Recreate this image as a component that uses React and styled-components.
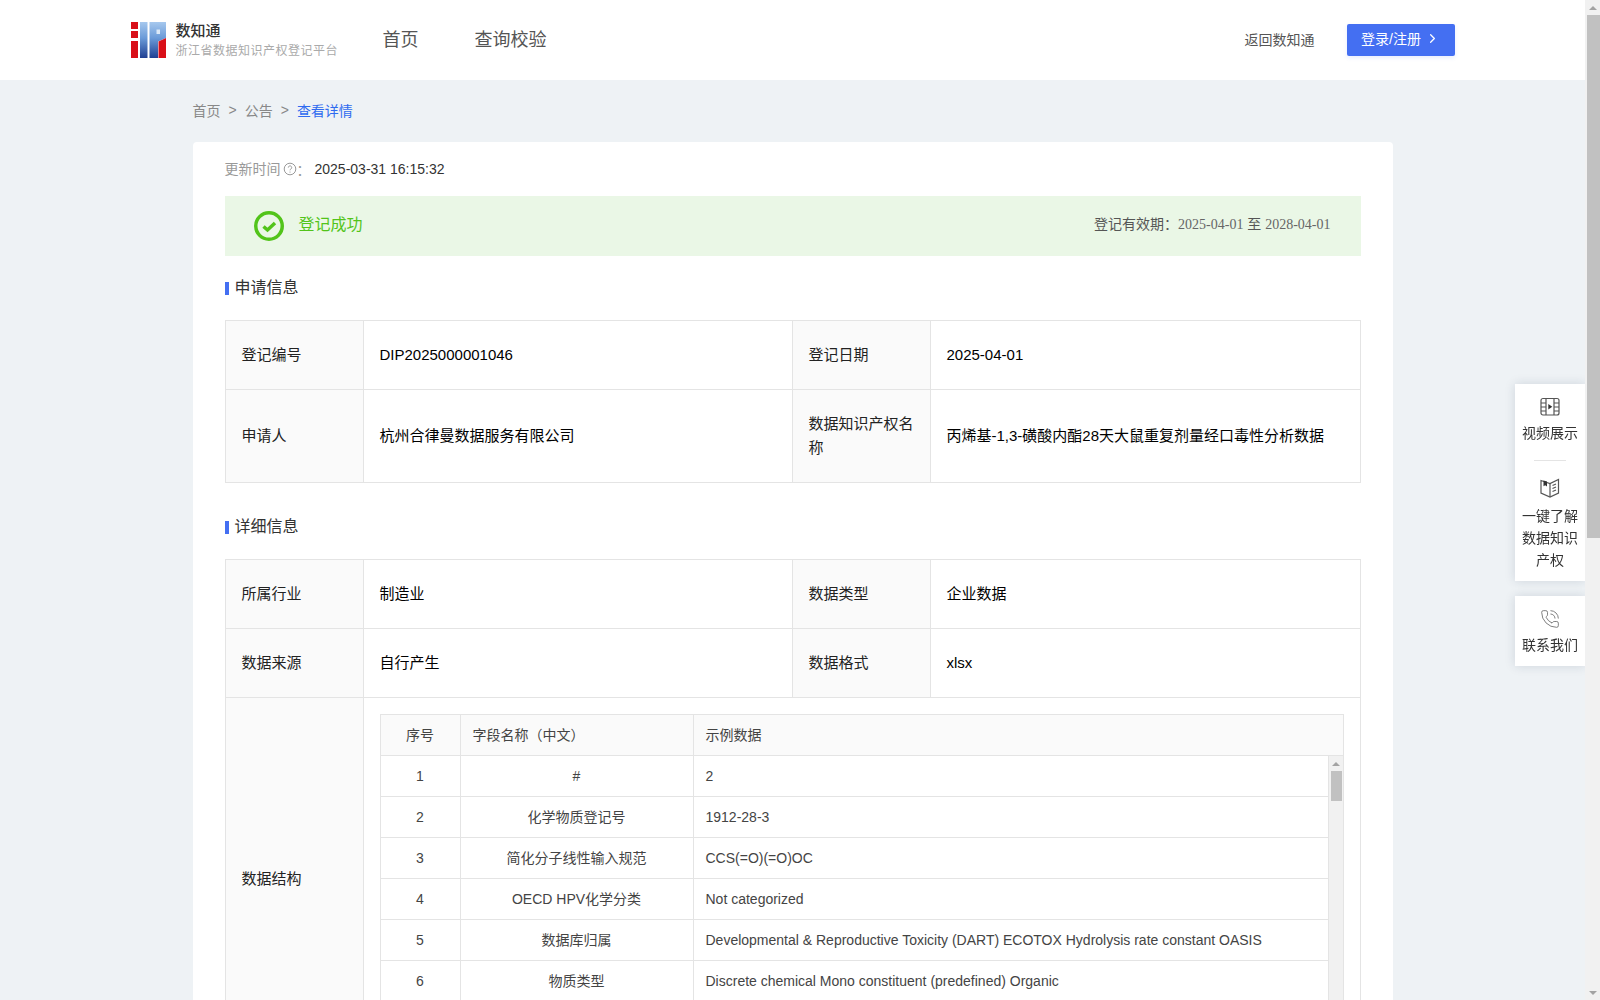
import React from 'react';
import styled, { createGlobalStyle } from 'styled-components';
import { ChevronRight, PhoneCall } from 'lucide-react';

const GlobalStyle = createGlobalStyle`
  body {
    margin: 0;
    background: #eef2f5;
    color: #333;
    font-family: "Liberation Sans", "Noto Sans CJK SC", sans-serif;
    font-size: 14px;
  }

  * {
    box-sizing: border-box;
  }
`;

const Page = styled.div`
  min-height: 1855px;
  padding-right: 15px;
`;

const Rail = styled.div`
  width: 15px;
  display: flex;
  flex-direction: column;
  flex-shrink: 0;
  background: #f1f1f1;
`;

const PageRail = styled(Rail)`
  position: fixed;
  top: 0;
  right: 0;
  bottom: 0;
`;

const TableRail = styled(Rail)`
  border-left: 1px solid #e4e4e4;
`;

const RailArrow = styled.div`
  height: ${props => props.$size}px;
  flex-shrink: 0;
  display: flex;
  align-items: center;
  justify-content: center;
  margin-top: ${props => (props.$down ? 'auto' : '0')};

  &::before {
    content: '';
    border-left: 4px solid transparent;
    border-right: 4px solid transparent;
    border-${props => (props.$down ? 'top' : 'bottom')}: 4px solid #a3a3a3;
  }
`;

const RailThumb = styled.div`
  height: ${props => props.$length}px;
  margin-left: ${props => props.$inset}px;
  margin-right: ${props => props.$end}px;
  background: #c1c1c1;
`;

const Header = styled.header`
  height: 80px;
  background: #fff;
`;

const HeaderInner = styled.div`
  width: 1324px;
  height: 100%;
  margin: 0 auto;
  display: flex;
  align-items: center;
`;

const Brand = styled.div`
  display: flex;
  align-items: center;
  gap: 10px;
  width: 252px;
`;

const BrandText = styled.div`
  display: flex;
  flex-direction: column;
  gap: 2px;
`;

const BrandName = styled.div`
  font-size: 15px;
  line-height: 20px;
  font-weight: 500;
  color: #333;
`;

const BrandSub = styled.div`
  font-size: 12px;
  line-height: 16px;
  letter-spacing: 0.5px;
  color: #aaa;
`;

const Nav = styled.nav`
  display: flex;
  gap: 56px;
  flex: 1;
  padding-bottom: 4px;
`;

const NavLink = styled.a`
  font-size: 18px;
  color: #555;
`;

const BackLink = styled.a`
  font-size: 14px;
  color: #555;
  margin-right: 32px;
  padding-bottom: 2px;
`;

const LoginButton = styled.button`
  width: 108px;
  height: 32px;
  display: flex;
  align-items: center;
  justify-content: center;
  gap: 4px;
  padding: 0 0 4px;
  border: none;
  border-radius: 2px;
  background: #446ff2;
  color: #fff;
  font: inherit;
  font-size: 14px;
  box-shadow: 0 2px 4px rgba(68, 111, 242, 0.12);
`;

const Main = styled.main`
  width: 1200px;
  margin: 0 auto;
`;

const Breadcrumb = styled.div`
  height: 62px;
  display: flex;
  align-items: center;
  gap: 8px;
  padding-bottom: 3px;
  color: #888;
`;

const Crumb = styled.span`
  color: ${props => (props.$active ? '#2f6bf0' : '#888')};
`;

const Card = styled.section`
  background: #fff;
  border-radius: 4px;
  padding: 16px 32px 32px;
`;

const UpdateRow = styled.div`
  display: flex;
  align-items: center;
  height: 22px;
  margin-bottom: 1px;
  color: #999;
`;

const UpdateLabel = styled.span`
  margin-top: -2px;
`;

const HelpMark = styled.svg`
  width: 14px;
  height: 14px;
  margin-left: 2px;
`;

const UpdateValue = styled.span`
  color: #333;
  margin-left: 4px;
`;

const StatusBar = styled.div`
  height: 60px;
  margin-top: 16px;
  padding: 0 30px 0 29px;
  display: flex;
  align-items: center;
  background: #eaf7e6;
`;

const StatusText = styled.span`
  flex: 1;
  margin-left: 15px;
  padding-bottom: 7px;
  font-size: 16px;
  color: #52c41a;
`;

const Validity = styled.span`
  color: #555;
  padding-bottom: 6px;
`;

const ValidityDate = styled.span`
  font-family: "Liberation Serif", "Noto Sans CJK SC", serif;
  color: #666;
`;

const SectionTitle = styled.h3`
  margin: ${props => props.$top}px 0 22px;
  display: flex;
  align-items: center;
  gap: 6px;
  height: 22px;
  font-size: 16px;
  font-weight: 400;
  color: #333;
  line-height: 20px;

  &::before {
    content: '';
    width: 4px;
    height: 13px;
    margin-top: 3px;
    background: #446ff2;
  }
`;

const SectionLabel = styled.span`
  margin-top: 2px;
`;

const InfoTable = styled.table`
  width: 1136px;
  table-layout: fixed;
  border-collapse: collapse;
  font-size: 15px;
  line-height: 24px;
  color: #000;
`;

const Label = styled.td`
  width: 138px;
  padding: 22px 16px;
  border: 1px solid #e4e4e4;
  background: #fafafa;
  color: #222;
`;

const Value = styled.td`
  padding: ${props => (props.$flush ? '16px' : '22px 16px')};
  border: 1px solid #e4e4e4;
`;

const StructTable = styled.div`
  border: 1px solid #e4e4e4;
  border-bottom: none;
  font-size: 14px;
  line-height: 20px;
  color: #444;
`;

const StructBody = styled.div`
  height: 288px;
  display: flex;
`;

const StructRows = styled.div`
  flex: 1;
  min-width: 0;
`;

const FieldRow = styled.div`
  display: grid;
  grid-template-columns: 79px 233px 1fr;
  height: 41px;
  border-bottom: 1px solid #e4e4e4;
  background: ${props => (props.$head ? '#fafafa' : '#fff')};
`;

const FieldCell = styled.div`
  display: flex;
  align-items: center;
  justify-content: ${props => (props.$center ? 'center' : 'flex-start')};
  padding: 0 12px;
  border-left: ${props => (props.$first ? 'none' : '1px solid #e4e4e4')};
`;

const SideDock = styled.aside`
  position: fixed;
  top: 384px;
  right: 15px;
  width: 70px;
  display: flex;
  flex-direction: column;
  gap: 15px;
`;

const DockCard = styled.div`
  background: #fff;
  box-shadow: 0 0 10px rgba(30, 50, 80, 0.15);
  padding: 13px 0 10px;
  display: flex;
  flex-direction: column;
  align-items: center;
`;

const DockText = styled.div`
  font-size: 14px;
  line-height: 22px;
  color: #333;
  text-align: center;
  margin-top: ${props => props.$top || 5}px;
`;

const DockDivider = styled.div`
  width: 32px;
  height: 1px;
  margin: 16px 0 17px;
  background: #e4e4e4;
`;

const fields = [
  ['1', '#', '2'],
  ['2', '化学物质登记号', '1912-28-3'],
  ['3', '简化分子线性输入规范', 'CCS(=O)(=O)OC'],
  ['4', 'OECD HPV化学分类', 'Not categorized'],
  ['5', '数据库归属', 'Developmental & Reproductive Toxicity (DART) ECOTOX Hydrolysis rate constant OASIS'],
  ['6', '物质类型', 'Discrete chemical Mono constituent (predefined) Organic'],
];

const Logo = () => (
  <svg width="35" height="36" viewBox="0 0 35 36">
    <defs>
      <linearGradient id="logoBlue" x1="0" y1="0" x2="0" y2="1">
        <stop offset="0" stopColor="#a6c8ee" />
        <stop offset="0.45" stopColor="#6a9ad8" />
        <stop offset="1" stopColor="#1f3f92" />
      </linearGradient>
    </defs>
    <path d="M0 0h7v7H0zM0 9h7v7H0zM0 19h7v17H0z" fill="#d90f18" />
    <rect x="9" width="7.5" height="36" fill="url(#logoBlue)" />
    <path d="M18.5 0H35v16l-8 3.500V36h-8.500z" fill="url(#logoBlue)" />
    <rect x="25.500" y="7.500" width="3.500" height="4.500" fill="#dce9f8" />
    <path d="M27.500 19.500 35 16v20h-7.500z" fill="#d90f18" />
  </svg>
);

const FilmIcon = () => (
  <svg width="20" height="20" viewBox="0 0 20 20" fill="none" stroke="#555" strokeWidth="1.200">
    <rect x="1" y="1.500" width="18" height="16.500" rx="2" />
    <path d="M6 1.500V18M14 1.500V18M1 6h5M1 10h5M1 14h5M14 6h5M14 10h5M14 14h5" />
    <path d="M8.300 7l4 2.800-4 2.800z" fill="#333" stroke="none" />
  </svg>
);

const BookIcon = () => (
  <svg width="20" height="20" viewBox="0 0 20 20" fill="none" stroke="#555" strokeWidth="1.200">
    <path d="M1 2.500l9 3 8.500-4V15L10 19l-9-4z" />
    <path d="M10 5.500V19M12.500 7.500l3.500-1.500M12.500 10.500l3.500-1.500M12.500 13.500l3.500-1.500" />
    <path d="M3.500 2.500l3.500 1v5l-1.800-1.200-1.700 1z" fill="#333" stroke="none" />
  </svg>
);

const App = () => (
  <Page>
    <GlobalStyle />
    <Header>
      <HeaderInner>
        <Brand>
          <Logo />
          <BrandText>
            <BrandName>数知通</BrandName>
            <BrandSub>浙江省数据知识产权登记平台</BrandSub>
          </BrandText>
        </Brand>
        <Nav>
          <NavLink>首页</NavLink>
          <NavLink>查询校验</NavLink>
        </Nav>
        <BackLink>返回数知通</BackLink>
        <LoginButton>
          登录/注册
          <ChevronRight size={15} />
        </LoginButton>
      </HeaderInner>
    </Header>

    <Main>
      <Breadcrumb>
        <Crumb>首页</Crumb>
        <Crumb>&gt;</Crumb>
        <Crumb>公告</Crumb>
        <Crumb>&gt;</Crumb>
        <Crumb $active>查看详情</Crumb>
      </Breadcrumb>

      <Card>
        <UpdateRow>
          <UpdateLabel>更新时间</UpdateLabel>
          <HelpMark viewBox="0 0 14 14" fill="none" stroke="#999">
            <circle cx="7" cy="7" r="5.800" />
            <path d="M5.300 5.600a1.700 1.700 0 1 1 2.600 1.400c-.6.400-.9.700-.9 1.300M7 9.600v1" />
          </HelpMark>
          ：<UpdateValue>2025-03-31 16:15:32</UpdateValue>
        </UpdateRow>

        <StatusBar>
          <svg width="30" height="30" viewBox="0 0 30 30" fill="none" stroke="#52c41a">
            <circle cx="15" cy="15" r="13.250" strokeWidth="3.500" />
            <path d="M9.500 15.500l4 3.500 7.500-7" strokeWidth="3.500" />
          </svg>
          <StatusText>登记成功</StatusText>
          <Validity>
            登记有效期：<ValidityDate>2025-04-01</ValidityDate> 至 <ValidityDate>2028-04-01</ValidityDate>
          </Validity>
        </StatusBar>

        <SectionTitle $top={20}><SectionLabel>申请信息</SectionLabel></SectionTitle>
        <InfoTable>
          <colgroup>
            <col width="138" />
            <col width="429" />
            <col width="138" />
            <col />
          </colgroup>
          <tbody>
            <tr>
              <Label>登记编号</Label>
              <Value>DIP2025000001046</Value>
              <Label>登记日期</Label>
              <Value>2025-04-01</Value>
            </tr>
            <tr>
              <Label>申请人</Label>
              <Value>杭州合律曼数据服务有限公司</Value>
              <Label>数据知识产权名称</Label>
              <Value>丙烯基-1,3-磺酸内酯28天大鼠重复剂量经口毒性分析数据</Value>
            </tr>
          </tbody>
        </InfoTable>

        <SectionTitle $top={32}><SectionLabel>详细信息</SectionLabel></SectionTitle>
        <InfoTable>
          <colgroup>
            <col width="138" />
            <col width="429" />
            <col width="138" />
            <col />
          </colgroup>
          <tbody>
            <tr>
              <Label>所属行业</Label>
              <Value>制造业</Value>
              <Label>数据类型</Label>
              <Value>企业数据</Value>
            </tr>
            <tr>
              <Label>数据来源</Label>
              <Value>自行产生</Value>
              <Label>数据格式</Label>
              <Value>xlsx</Value>
            </tr>
            <tr>
              <Label>数据结构</Label>
              <Value colSpan={3} $flush>
                <StructTable>
                  <FieldRow $head>
                    <FieldCell $first $center>序号</FieldCell>
                    <FieldCell>字段名称（中文）</FieldCell>
                    <FieldCell>示例数据</FieldCell>
                  </FieldRow>
                  <StructBody>
                    <StructRows>
                      {fields.map(([no, name, sample]) => (
                        <FieldRow key={no}>
                          <FieldCell $first $center>{no}</FieldCell>
                          <FieldCell $center>{name}</FieldCell>
                          <FieldCell>{sample}</FieldCell>
                        </FieldRow>
                      ))}
                    </StructRows>
                    <TableRail>
                      <RailArrow $size={15} />
                      <RailThumb $length={30} $inset={2} $end={1} />
                      <RailArrow $size={15} $down />
                    </TableRail>
                  </StructBody>
                </StructTable>
              </Value>
            </tr>
          </tbody>
        </InfoTable>
      </Card>
    </Main>

    <SideDock>
      <DockCard>
        <FilmIcon />
        <DockText>视频展示</DockText>
        <DockDivider />
        <BookIcon />
        <DockText $top={7}>一键了解<br />数据知识<br />产权</DockText>
      </DockCard>
      <DockCard>
        <PhoneCall size={20} color="#666" strokeWidth={1} />
        <DockText>联系我们</DockText>
      </DockCard>
    </SideDock>

    <PageRail>
      <RailArrow $size={15} />
      <RailThumb $length={523} $inset={2} $end={0} />
      <RailArrow $size={15} $down />
    </PageRail>
  </Page>
);

export default App;
